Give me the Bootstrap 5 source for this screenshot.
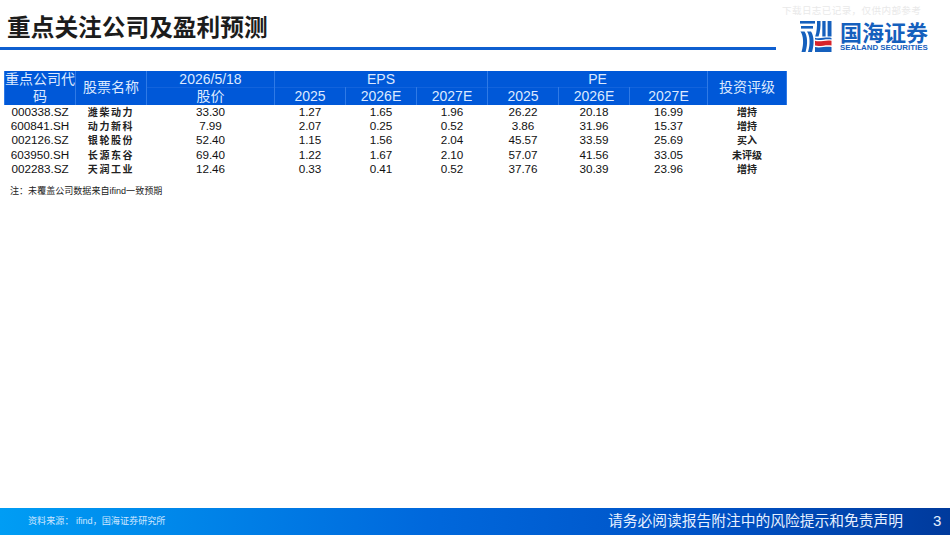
<!DOCTYPE html>
<html lang="zh-CN">
<head>
    <meta charset="UTF-8">
    <title>重点关注公司及盈利预测</title>
    <link href="https://cdn.jsdelivr.net/npm/bootstrap@5.3.2/dist/css/bootstrap.min.css" rel="stylesheet">
    <style>
        body {
            background-color: #fff;
            color: #111;
            font-family: "Liberation Sans", "Noto Sans CJK SC", sans-serif;
        }

        .slide-page {
            width: 950px;
            height: 535px;
            overflow: hidden;
        }

        /* Title bar */
        .title-zone {
            width: 776px;
            height: 50px;
            border-bottom: 3px solid #0f5fd0;
            padding: 12px 0 0 7px;
        }

        .title-text {
            font-size: 23.7px;
            line-height: 32px;
            font-weight: 700;
            color: #1c1c1c;
            margin: 0;
        }

        .brand-zone {
            width: 174px;
            padding-left: 24px;
        }

        .stamp-text {
            font-size: 9.6px;
            line-height: 12px;
            height: 20px;
            padding-top: 4px;
            margin-left: -18px;
            letter-spacing: 0.35px;
            color: #e9e9e9;
            font-family: "Noto Sans CJK SC", sans-serif;
            white-space: nowrap;
        }

        .brand-cn {
            font-size: 22px;
            line-height: 22px;
            font-weight: 700;
            color: #1560bd;
            font-family: "Noto Sans CJK SC", sans-serif;
            white-space: nowrap;
        }

        .brand-en {
            font-size: 7.9px;
            line-height: 9px;
            margin-top: 1px;
            font-weight: 700;
            color: #1560bd;
            white-space: nowrap;
        }

        .brand-mark {
            margin-top: 1px;
            margin-right: 8px;
            flex-shrink: 0;
        }

        /* Forecast table */
        .table-zone {
            padding: 18.5px 0 0 4px;
        }

        .forecast-grid {
            table-layout: fixed;
            border-collapse: collapse;
            width: 782px;
            font-size: 11.7px;
            text-align: center;
        }

        .forecast-grid thead th {
            background-color: #0058d8;
            color: #dce9ff;
            font-weight: 400;
            font-size: 14px;
            line-height: 16.5px;
            padding: 0;
            border: 1px solid #2f7ae6;
            border-top: 0;
            border-bottom: 0;
            vertical-align: middle;
            white-space: nowrap;
        }

        .forecast-grid thead tr {
            height: 16.5px;
        }

        .forecast-grid thead tr + tr th {
            border-top: 1px solid #1263dc;
        }

        .forecast-grid tbody td {
            padding: 0;
            height: 14.2px;
            line-height: 14.2px;
            color: #111;
        }

        .forecast-grid tbody tr:nth-child(4) td {
            height: 15px;
            line-height: 15px;
        }

        .forecast-grid .stock-name {
            font-family: "Noto Sans CJK SC", sans-serif;
            font-size: 10px;
            font-weight: 700;
            letter-spacing: 1.6px;
            color: #222;
        }

        .forecast-grid .stock-rate {
            font-family: "Noto Sans CJK SC", sans-serif;
            font-size: 10px;
            font-weight: 700;
            color: #222;
        }

        .note-text {
            padding: 8.5px 0 0 6px;
            font-size: 9.05px;
            line-height: 12px;
            color: #222;
        }

        /* Bottom bar */
        .foot-bar {
            height: 27px;
            background: linear-gradient(90deg, #009df4 0%, #0068dc 45%, #0052c6 75%, #003a9c 100%);
            color: #fff;
        }

        .source-text {
            padding-left: 28px;
            font-size: 9.1px;
            color: #cfe6ff;
        }

        .risk-text {
            font-size: 14.75px;
            color: #e6f0ff;
            margin-right: 30px;
        }

        .page-num {
            font-size: 15px;
            width: 17px;
            color: #e6f0ff;
        }
    </style>
</head>
<body>

<div class="slide-page d-flex flex-column">

    <div class="d-flex">
        <div class="title-zone">
            <h1 class="title-text">重点关注公司及盈利预测</h1>
        </div>
        <div class="brand-zone">
            <div class="stamp-text">下载日志已记录，仅供内部参考</div>
            <div class="d-flex align-items-start">
                <!-- wave mark of the logo -->
                <svg class="brand-mark" width="32" height="31" viewBox="0 0 32 31" aria-hidden="true">
                    <g fill="#1560bd">
                        <path d="M0 0 H15 V2.6 H0 Z"/>
                        <path d="M1 5 H13 V7.6 H1 Z"/>
                        <path d="M0.5 10.5 C3.5 15 4 23 1.5 31 H5.5 C8 23 7.5 15 4.5 10.5 Z"/>
                        <path d="M7 10.5 C10 15 10.5 23 8 31 H12 C14.5 23 14 15 11 10.5 Z"/>
                        <path d="M17 0 H20.5 C20.8 5 20.2 11 18.5 15.5 H15.2 C16.8 11 17.2 5 17 0 Z"/>
                        <path d="M22.3 0 H25.6 V15.5 H22.3 Z"/>
                        <path d="M27.6 0 H31.5 V15.5 H27.6 Z"/>
                        <path d="M15 16.8 C20 18.4 26 15.6 31.5 17 V18.6 C26 17.4 20 20 15 18.6 Z"/>
                        <path d="M15 26 C20 27.4 26 25 31.5 26 V31 H15 Z"/>
                    </g>
                    <path d="M15 19.8 C20 21.4 26 18.6 31.5 19.8 V24.6 C26 23.4 20 26 15 24.6 Z" fill="#d8232a"/>
                </svg>
                <div>
                    <div class="brand-cn">国海证券</div>
                    <div class="brand-en">SEALAND SECURITIES</div>
                </div>
            </div>
        </div>
    </div>

    <div class="table-zone">
        <table class="forecast-grid">
            <colgroup>
                <col style="width: 71px">
                <col style="width: 71px">
                <col style="width: 128px">
                <col style="width: 71px">
                <col style="width: 71px">
                <col style="width: 71px">
                <col style="width: 71px">
                <col style="width: 71px">
                <col style="width: 78px">
                <col style="width: 79px">
            </colgroup>
            <thead>
                <tr>
                    <th rowspan="2">重点公司代<br>码</th>
                    <th rowspan="2">股票名称</th>
                    <th>2026/5/18</th>
                    <th colspan="3">EPS</th>
                    <th colspan="3">PE</th>
                    <th rowspan="2">投资评级</th>
                </tr>
                <tr>
                    <th>股价</th>
                    <th>2025</th>
                    <th>2026E</th>
                    <th>2027E</th>
                    <th>2025</th>
                    <th>2026E</th>
                    <th>2027E</th>
                </tr>
            </thead>
            <tbody id="forecastRows"></tbody>
        </table>
        <div class="note-text">注：未覆盖公司数据来自ifind一致预期</div>
    </div>

    <div class="foot-bar mt-auto d-flex align-items-center">
        <div class="source-text">资料来源： ifind，国海证券研究所</div>
        <div class="risk-text ms-auto">请务必阅读报告附注中的风险提示和免责声明</div>
        <div class="page-num">3</div>
    </div>
</div>

<script src="https://cdn.jsdelivr.net/npm/bootstrap@5.3.2/dist/js/bootstrap.bundle.min.js"></script>
<script>
    const rows = [
        ['000338.SZ', '潍柴动力', '33.30', '1.27', '1.65', '1.96', '26.22', '20.18', '16.99', '增持'],
        ['600841.SH', '动力新科', '7.99', '2.07', '0.25', '0.52', '3.86', '31.96', '15.37', '增持'],
        ['002126.SZ', '银轮股份', '52.40', '1.15', '1.56', '2.04', '45.57', '33.59', '25.69', '买入'],
        ['603950.SH', '长源东谷', '69.40', '1.22', '1.67', '2.10', '57.07', '41.56', '33.05', '未评级'],
        ['002283.SZ', '天润工业', '12.46', '0.33', '0.41', '0.52', '37.76', '30.39', '23.96', '增持']
    ];
    const body = document.getElementById('forecastRows');
    rows.forEach(row => {
        const tr = document.createElement('tr');
        row.forEach((val, i) => {
            const td = document.createElement('td');
            td.textContent = val;
            if (i === 1) td.className = 'stock-name';
            if (i === 9) td.className = 'stock-rate';
            tr.appendChild(td);
        });
        body.appendChild(tr);
    });
</script>
</body>
</html>
